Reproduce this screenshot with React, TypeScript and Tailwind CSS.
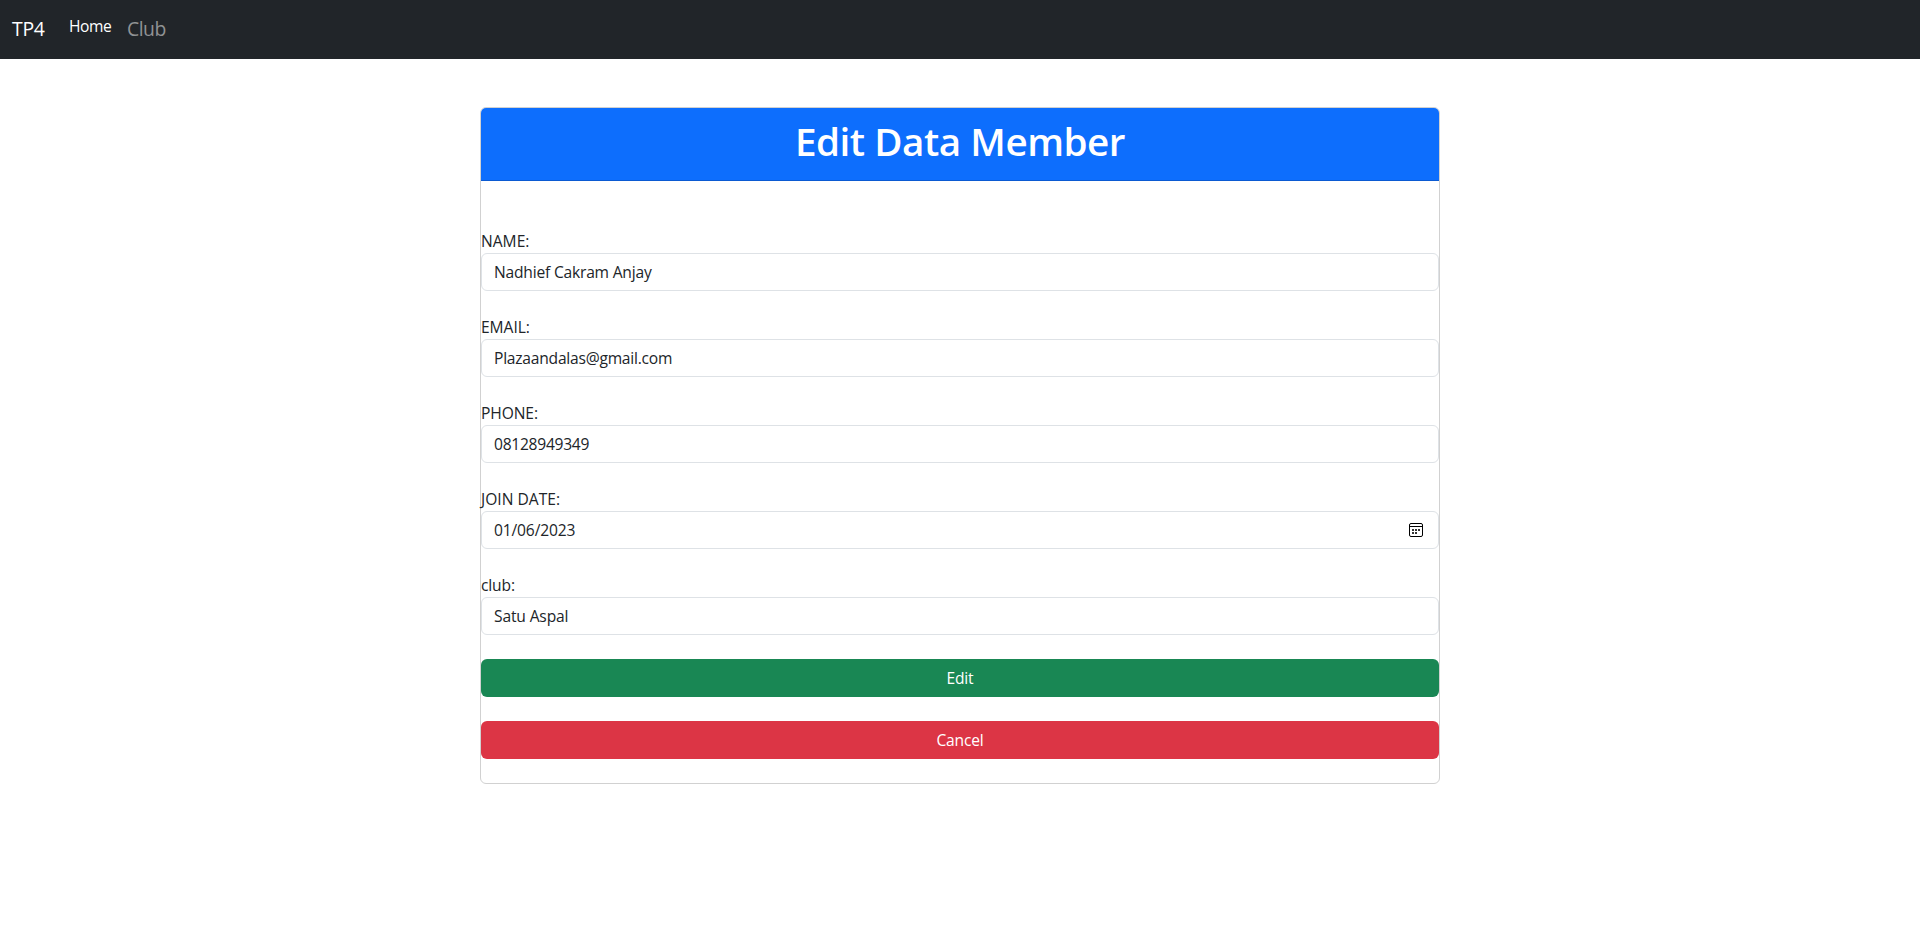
const fields = [
  { label: 'NAME:', value: 'Nadhief Cakram Anjay', labelTrack: 'tracking-[0px]', track: 'tracking-[-0.2px]' },
  { label: 'EMAIL:', value: 'Plazaandalas@gmail.com', labelTrack: 'tracking-[-0.05px]', track: 'tracking-[-0.23px]' },
  { label: 'PHONE:', value: '08128949349', labelTrack: 'tracking-[-0.1px]', track: 'tracking-[-0.27px]' },
  { label: 'JOIN DATE:', value: '01/06/2023', labelTrack: 'tracking-[0px]', track: 'tracking-[-0.15px]', date: true },
  { label: 'club:', value: 'Satu Aspal', labelTrack: 'tracking-[-0.15px]', track: 'tracking-[-0.15px]' },
];

function CalendarIcon() {
  return (
    <svg width="14" height="14" viewBox="0 0 14 14" fill="none" className="shrink-0">
      <rect x="0.5" y="0.5" width="13" height="13" rx="1.5" stroke="#000" />
      <path d="M0.5 3.5H13.5" stroke="#000" />
      <path
        d="M3 6h2v2H3zM6 6h2v2H6zM9 6h2v2H9zM3 9h2v2H3zM6 9h2v2H6z"
        fill="#333"
      />
    </svg>
  );
}

export default function App() {
  return (
    <div className="min-h-[928px] bg-white font-['Open_Sans',sans-serif] text-[15.6px] leading-6 text-[#212529]">
      <nav className="flex h-[59px] items-start bg-[#212529] px-3">
        <a className="w-[57px] pt-[14px] text-[19.4px] leading-[30px] tracking-[-0.3px] text-white">TP4</a>
        <a className="w-[58px] pt-[14px] tracking-[-0.4px] text-white">Home</a>
        <a className="pt-[14px] text-[19.4px] leading-[30px] tracking-[-0.5px] text-[#909294]">Club</a>
      </nav>
      <main className="mx-auto mt-12 w-[960px] rounded-md border border-[#d1d1d1]">
        <header className="h-[73px] rounded-t-[5px] border-b border-[#0b5ad2] bg-[#0d6efd] pt-[9px] text-center text-white">
          <h1 className="text-[38.6px] leading-[48px] font-semibold tracking-[-0.45px]">Edit Data Member</h1>
        </header>
        <form className="flex flex-col gap-6 pt-12 pb-6">
          {fields.map((f) => (
            <div key={f.label}>
              <div className={`h-6 ${f.labelTrack}`}>
                <span>{f.label}</span>
              </div>
              <div className="flex h-[38px] items-center justify-between rounded-md border border-[#dee2e6] bg-white pr-[15px] pl-3">
                <span className={f.track}>{f.value}</span>
                {f.date && <CalendarIcon />}
              </div>
            </div>
          ))}
          <button type="button" className="h-[38px] rounded-md bg-[#198754] tracking-[-0.2px] text-white">
            <span>Edit</span>
          </button>
          <button type="button" className="h-[38px] rounded-md bg-[#dc3545] tracking-[-0.2px] text-white">
            <span>Cancel</span>
          </button>
        </form>
      </main>
    </div>
  );
}
